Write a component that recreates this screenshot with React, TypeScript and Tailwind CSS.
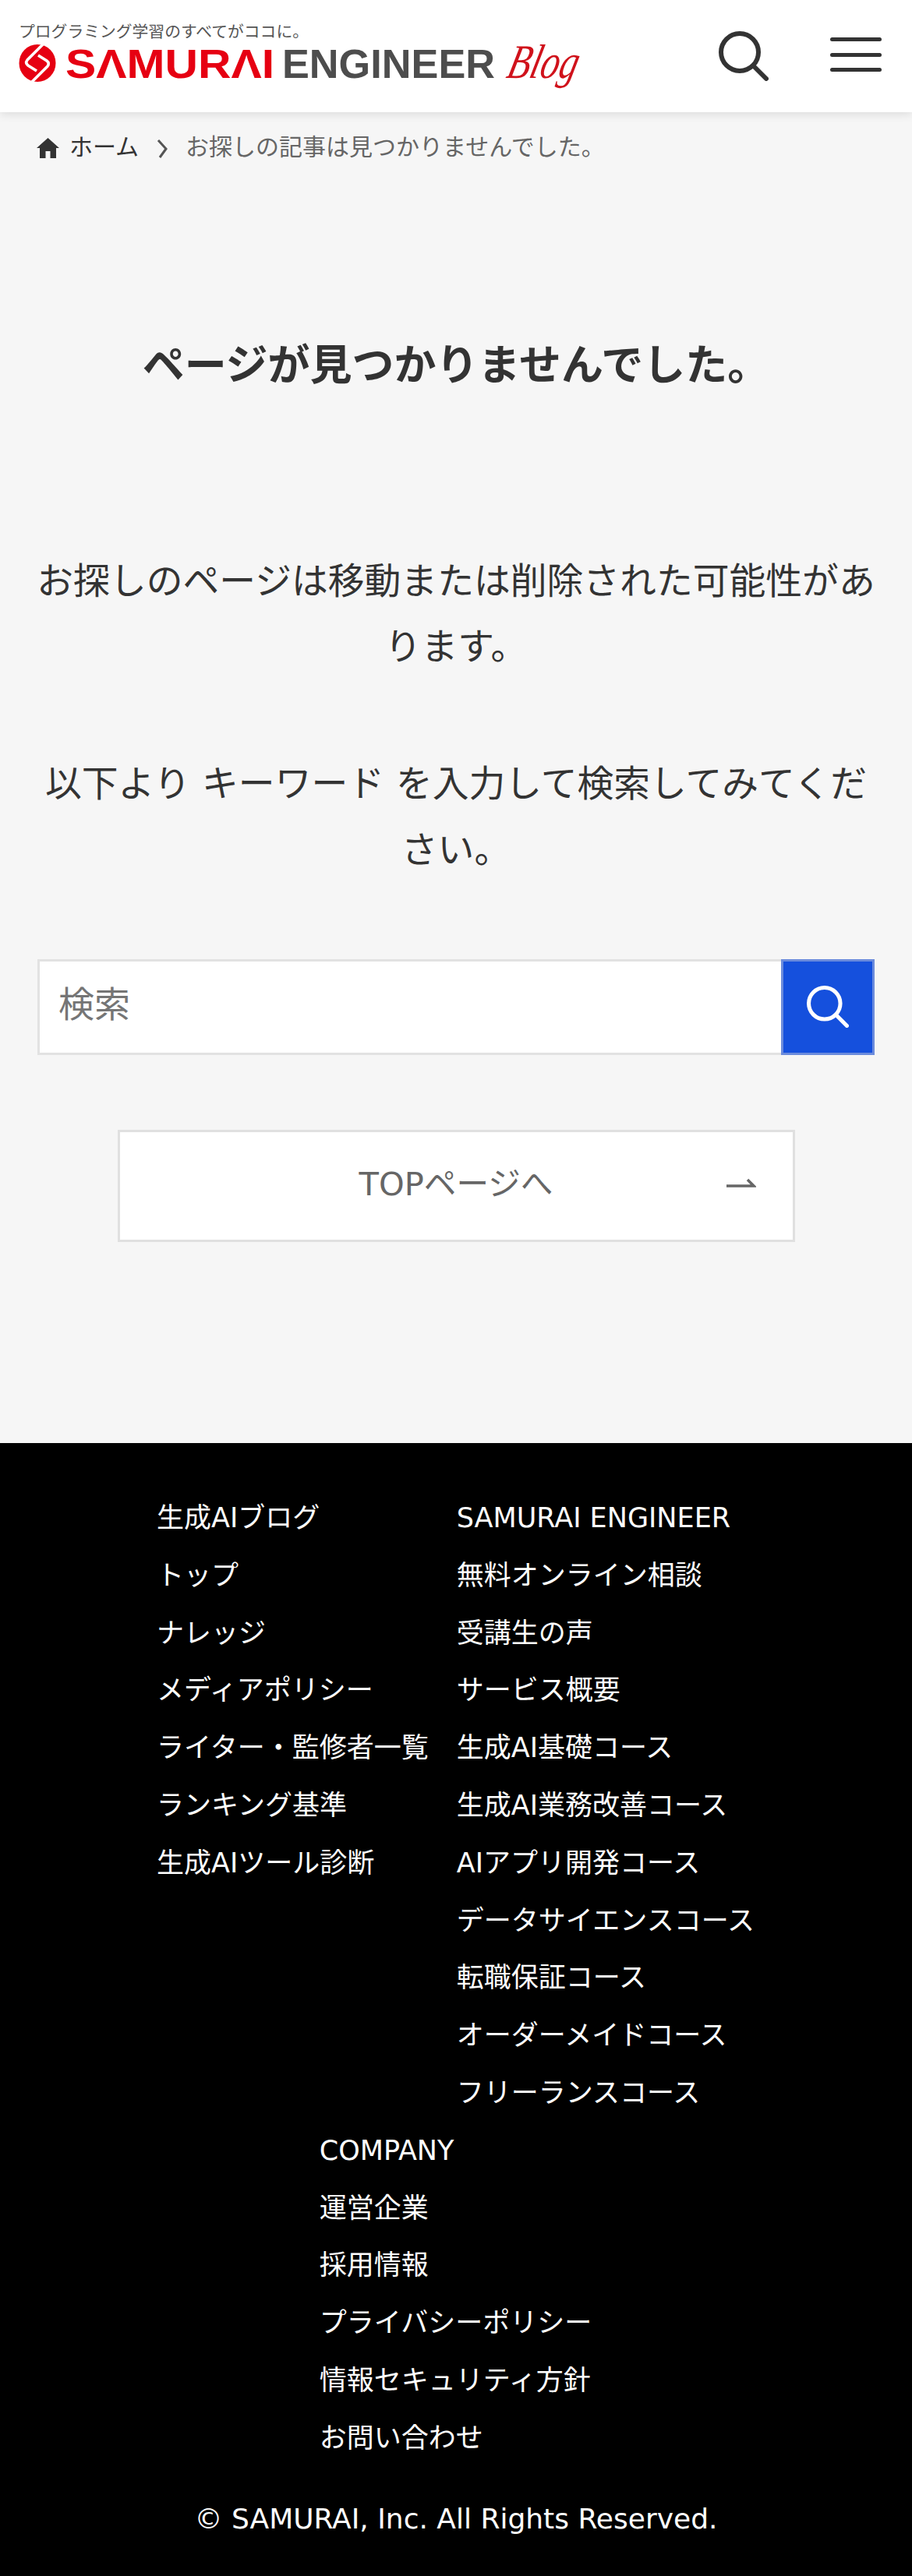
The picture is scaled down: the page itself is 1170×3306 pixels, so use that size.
import React from "react";

const font = { fontFamily: '"DejaVu Sans", "Noto Sans CJK JP", sans-serif' };

function Logo() {
  return (
    <svg width="724" height="84" viewBox="0 0 724 84" className="shrink-0 overflow-visible">
      <text x="0" y="18" fontSize="20.5" fill="#555" textLength="372" lengthAdjust="spacingAndGlyphs" fontFamily='"Noto Sans CJK JP", sans-serif'>
        プログラミング学習のすべてがココに。
      </text>
      <g transform="translate(0 27)">
        <ellipse cx="24" cy="24" rx="23.5" ry="24" fill="#e60012" />
        <path d="M31 0 L11 20 Q8 24 12 27 L23 34 M17 48 L37 28 Q40 24 36 21 L25 14" fill="none" stroke="#fff" strokeWidth="3.6" />
      </g>
      <text x="60" y="70" fontSize="52" fontWeight="700" fill="#e60012" textLength="268" lengthAdjust="spacingAndGlyphs" fontFamily='"Liberation Sans", sans-serif'>
        SΛMURΛI
      </text>
      <text x="338" y="70" fontSize="52" fontWeight="700" fill="#4d4d4d" textLength="273" lengthAdjust="spacingAndGlyphs" fontFamily='"Liberation Sans", sans-serif'>
        ENGINEER
      </text>
      <text x="0" y="0" transform="translate(624 70) skewX(-14)" fontSize="62" fontStyle="italic" fill="#d0121b" textLength="90" lengthAdjust="spacingAndGlyphs" fontFamily='"Liberation Serif", serif'>
        Blog
      </text>
    </svg>
  );
}

function SearchIcon({ size, color, sw }: { size: number; color: string; sw: number }) {
  return (
    <svg width={size} height={size} viewBox="0 0 64 64" fill="none" stroke={color} strokeWidth={sw} strokeLinecap="round">
      <circle cx="27" cy="27" r="24" />
      <path d="M44.5 44.5 L61 61" />
    </svg>
  );
}

const col1 = ["生成AIブログ", "トップ", "ナレッジ", "メディアポリシー", "ライター・監修者一覧", "ランキング基準", "生成AIツール診断"];
const col2 = ["SAMURAI ENGINEER", "無料オンライン相談", "受講生の声", "サービス概要", "生成AI基礎コース", "生成AI業務改善コース", "AIアプリ開発コース", "データサイエンスコース", "転職保証コース", "オーダーメイドコース", "フリーランスコース"];
const col3 = ["COMPANY", "運営企業", "採用情報", "プライバシーポリシー", "情報セキュリティ方針", "お問い合わせ"];

function FooterCol({ items }: { items: string[] }) {
  return (
    <ul className="flex flex-col">
      {items.map((t) => (
        <li key={t} className="h-[73.8px] leading-[73.8px] whitespace-nowrap">{t}</li>
      ))}
    </ul>
  );
}

export default function App() {
  return (
    <div className="w-[1170px] bg-[#f6f6f6] text-[#333]" style={font}>
      <header className="relative h-[144px] bg-white flex items-center justify-between pl-[24px] pr-[39px] shadow-[0_2px_12px_rgba(0,0,0,0.12)]">
        <Logo />
        <div className="flex items-center gap-[79px]">
          <SearchIcon size={64} color="#333" sw={6} />
          <div className="flex flex-col gap-[14.5px] w-[66px] -mt-[4px]">
            <span className="block h-[5px] rounded-full bg-[#333]" />
            <span className="block h-[5px] rounded-full bg-[#333]" />
            <span className="block h-[5px] rounded-full bg-[#333]" />
          </div>
        </div>
      </header>

      <nav className="h-[88px] flex items-center pl-[47px] text-[30px]">
        <svg width="29" height="26" viewBox="0 0 29 26" className="mr-[13px] mt-[4px]" fill="#333">
          <path d="M14.5 0 L29 13 L25 13 L25 26 L17.5 26 L17.5 17 L11.5 17 L11.5 26 L4 26 L4 13 L0 13 Z" />
        </svg>
        <span className="text-[#333]">ホーム</span>
        <svg width="16" height="24" viewBox="0 0 16 24" className="ml-[22px] mr-[22px] mt-[6px]" fill="none" stroke="#555" strokeWidth="3">
          <path d="M3 1 L13 12 L5 23" />
        </svg>
        <span className="text-[#666]">お探しの記事は見つかりませんでした。</span>
      </nav>

      <main className="px-[46px] pt-[202px] pb-[258px] flex flex-col items-center text-center">
        <h1 className="text-[54px] leading-[72px] font-bold text-[#333]">ページが見つかりませんでした。</h1>
        <p className="mt-[198px] text-[46.8px] leading-[84.24px] text-[#333]">お探しのページは移動または削除された可能性があります。</p>
        <p className="mt-[92px] text-[46.8px] leading-[84.24px] text-[#333]">以下より キーワード を入力して検索してみてください。</p>
        <form className="mt-[98px] w-[1074px] h-[123px] flex">
          <input
            placeholder="検索"
            className="flex-1 min-w-0 h-full bg-white border-[3px] border-r-0 border-[#e2e2e2] pl-[24px] pb-[6px] text-[46px] text-[#333] placeholder:text-[#757575] outline-none"
            style={font}
          />
          <button type="button" className="w-[120px] h-full bg-[#1550dd] border-[3px] border-[#6b8bdc] flex items-center justify-center">
            <SearchIcon size={54} color="#fff" sw={6} />
          </button>
        </form>
        <a className="mt-[96px] relative w-[869px] h-[144px] bg-white border-[3px] border-[#e0e0e0] flex items-center justify-center pb-[4px] text-[41.6px] text-[#666]">
          TOPページへ
          <svg width="38" height="12" viewBox="0 0 38 12" className="absolute right-[47px] top-[59px]" fill="none" stroke="#666" strokeWidth="3.5">
            <path d="M0 10 H35 L27 2" />
          </svg>
        </a>
      </main>

      <footer className="bg-black text-white pt-[60px] h-[1455px] text-[35px]">
        <div className="flex flex-wrap justify-center gap-x-[36px] px-[30px] -ml-[1px]">
          <FooterCol items={col1} />
          <FooterCol items={col2} />
          <FooterCol items={col3} />
        </div>
        <div className="mt-[31px] text-center text-[36px] leading-[72px]">© SAMURAI, Inc. All Rights Reserved.</div>
      </footer>
    </div>
  );
}
